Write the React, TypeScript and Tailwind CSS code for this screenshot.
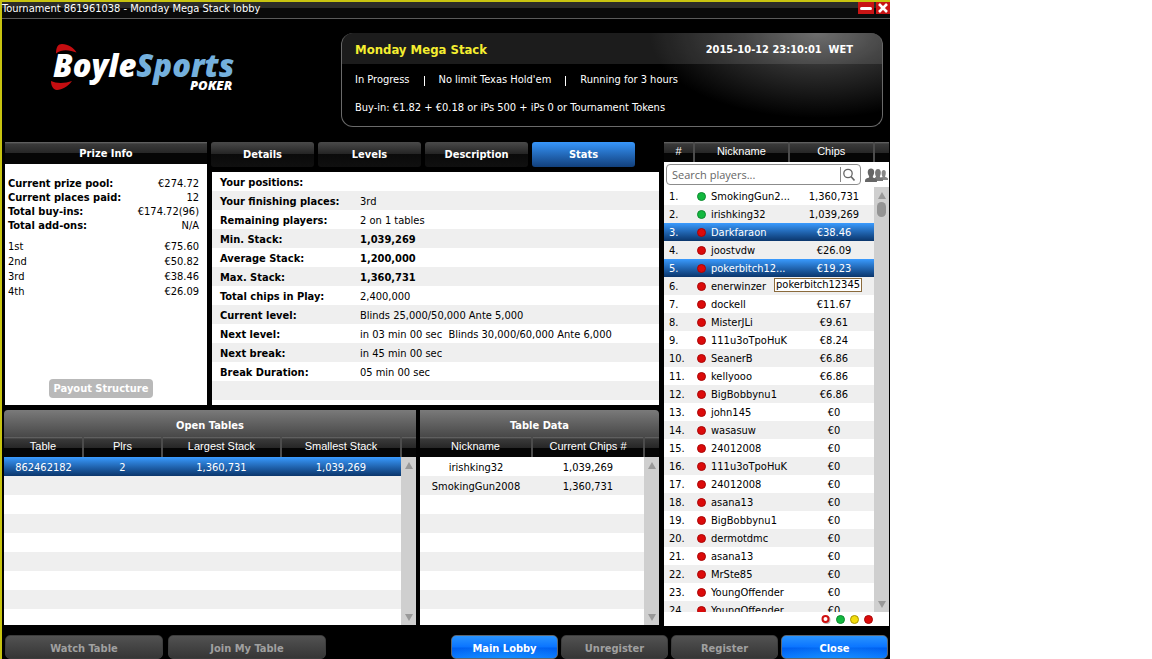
import React from "react";
import clsx from "clsx";

const HEAD =
  "bg-[linear-gradient(#6b6b6b_0px,#3a3a3a_2px,#262626_11px,#050505_11px,#050505_100%)]";
const STRIPES =
  "bg-[repeating-linear-gradient(#fff_0px,#fff_19px,#efefef_19px,#efefef_38px)]";
const SELECTED = "bg-linear-to-b from-[#3a9bff] to-[#0b366c] text-white";

const tabs = ["Details", "Levels", "Description", "Stats"];

const prizeSummary = [
  ["Current prize pool:", "€274.72"],
  ["Current places paid:", "12"],
  ["Total buy-ins:", "€174.72(96)"],
  ["Total add-ons:", "N/A"],
];

const payouts = [
  ["1st", "€75.60"],
  ["2nd", "€50.82"],
  ["3rd", "€38.46"],
  ["4th", "€26.09"],
];

const stats: { label: string; value: string; strong?: boolean }[] = [
  { label: "Your positions:", value: "" },
  { label: "Your finishing places:", value: "3rd" },
  { label: "Remaining players:", value: "2 on 1 tables" },
  { label: "Min. Stack:", value: "1,039,269", strong: true },
  { label: "Average Stack:", value: "1,200,000", strong: true },
  { label: "Max. Stack:", value: "1,360,731", strong: true },
  { label: "Total chips in Play:", value: "2,400,000" },
  { label: "Current level:", value: "Blinds 25,000/50,000 Ante 5,000" },
  { label: "Next level:", value: "in 03 min 00 sec\u00a0 Blinds 30,000/60,000 Ante 6,000" },
  { label: "Next break:", value: "in 45 min 00 sec" },
  { label: "Break Duration:", value: "05 min 00 sec" },
];

type Player = { name: string; chips: string; live?: boolean; selected?: boolean; tip?: string };

const players: Player[] = [
  { name: "SmokingGun2...", chips: "1,360,731", live: true },
  { name: "irishking32", chips: "1,039,269", live: true },
  { name: "Darkfaraon", chips: "€38.46", selected: true },
  { name: "joostvdw", chips: "€26.09" },
  { name: "pokerbitch12...", chips: "€19.23", selected: true, tip: "pokerbitch12345" },
  { name: "enerwinzer", chips: "" },
  { name: "dockell", chips: "€11.67" },
  { name: "MisterJLi", chips: "€9.61" },
  { name: "111u3oTpoHuK", chips: "€8.24" },
  { name: "SeanerB", chips: "€6.86" },
  { name: "kellyooo", chips: "€6.86" },
  { name: "BigBobbynu1", chips: "€6.86" },
  { name: "john145", chips: "€0" },
  { name: "wasasuw", chips: "€0" },
  { name: "24012008", chips: "€0" },
  { name: "111u3oTpoHuK", chips: "€0" },
  { name: "24012008", chips: "€0" },
  { name: "asana13", chips: "€0" },
  { name: "BigBobbynu1", chips: "€0" },
  { name: "dermotdmc", chips: "€0" },
  { name: "asana13", chips: "€0" },
  { name: "MrSte85", chips: "€0" },
  { name: "YoungOffender", chips: "€0" },
  { name: "YoungOffender", chips: "€0" },
];

function Logo() {
  return (
    <svg viewBox="0 0 200 60" className="h-[60px] w-[200px]" role="img" aria-label="BoyleSports Poker">
      <path d="M6 13.500C6 7 8 4 12 4c6 0 12 4 14.500 8.500C20 10 12 8.500 6 13.500Z" fill="#c40d10" />
      <path d="M1 41c5 2.500 14 2.500 21 0-4 5.500-10 9-15 9-4.500-.5-6-5-6-9Z" fill="#c40d10" />
      <g className="font-['Open_Sans',sans-serif] font-extrabold italic">
        <text x="3" y="37" fontSize="31" fill="#fff">
          Boyle<tspan fill="#74b0dd">Sports</tspan>
        </text>
        <text x="140" y="50" fontSize="13" fill="#fff">
          POKER
        </text>
      </g>
    </svg>
  );
}

function Dot({ color }: { color: "green" | "red" | "yellow" }) {
  return (
    <span
      className={clsx(
        "block size-[9px] shrink-0 rounded-full border",
        color === "green" && "border-[#0d8a30] bg-[#12b83e]",
        color === "red" && "border-[#a80606] bg-[#dc0a0a]",
        color === "yellow" && "border-[#a89400] bg-[#f2dc0c]",
      )}
    />
  );
}

function Scrollbar({ thumb }: { thumb?: boolean }) {
  return (
    <div className="flex w-[15px] shrink-0 flex-col items-center bg-[#cfcfcf] pt-1 pb-1">
      <button aria-label="Scroll up" className="flex h-2 w-full items-center justify-center">
        <svg viewBox="0 0 8 7" className="h-[7px] w-2">
          <path d="M4 0 8 7H0Z" fill="#999" />
        </svg>
      </button>
      {thumb && <div className="mt-[3px] h-[15px] w-[9px] rounded-full bg-[#949494]" />}
      <button aria-label="Scroll down" className="mt-auto flex h-2 w-full items-center justify-center">
        <svg viewBox="0 0 8 7" className="h-[7px] w-2">
          <path d="M4 7 8 0H0Z" fill="#999" />
        </svg>
      </button>
    </div>
  );
}

function Columns({ widths }: { widths: string[] }) {
  return (
    <colgroup>
      {widths.map((w, i) => (
        <col key={i} className={w} />
      ))}
    </colgroup>
  );
}

function HeaderTable({ cols, names }: { cols: string[]; names: string[] }) {
  return (
    <table className={clsx("w-full shrink-0 table-fixed border-collapse text-white", HEAD)}>
      <Columns widths={[...cols, "w-[15px]"]} />
      <thead>
        <tr className="h-5">
          {names.map((n, i) => (
            <th
              key={n}
              scope="col"
              className={clsx(
                "p-0 align-top font-['Liberation_Sans',sans-serif] text-[11px] leading-[19px] font-normal",
                i > 0 && "border-l-2 border-[#4c4c4c]",
              )}
            >
              {n}
            </th>
          ))}
          <td className="border-l-2 border-[#4c4c4c] p-0" />
        </tr>
      </thead>
    </table>
  );
}

function ListPanel({
  title,
  cols,
  names,
  rows,
  selected,
  className,
}: {
  title: string;
  cols: string[];
  names: string[];
  rows: string[][];
  selected?: number;
  className?: string;
}) {
  return (
    <section className={clsx("flex min-h-0 min-w-0 flex-col overflow-hidden", className)}>
      <h2 className="h-[27px] shrink-0 bg-linear-to-b from-[#7a7a7a] to-[#484848] pt-0.5 text-center text-[11px] leading-[28px] font-bold text-white">
        {title}
      </h2>
      <HeaderTable cols={cols} names={names} />
      <div className="flex min-h-0 flex-1">
        <div className={clsx("min-w-0 flex-1", STRIPES)}>
          <table aria-label={title} className="w-full table-fixed border-collapse text-center">
            <Columns widths={cols} />
            <tbody>
              {rows.map((r, i) => (
                <tr key={i} className={clsx("h-[19px]", i === selected && SELECTED)}>
                  {r.map((c, j) => (
                    <td key={j} className="p-0 pt-0.5 leading-[17px]">
                      {c}
                    </td>
                  ))}
                </tr>
              ))}
            </tbody>
          </table>
        </div>
        <Scrollbar />
      </div>
    </section>
  );
}

function PrizeInfo() {
  return (
    <section className="flex w-[202px] shrink-0 flex-col bg-white">
      <h2 className={clsx("h-[22px] text-center text-[11px] leading-6 font-bold text-white", HEAD)}>Prize Info</h2>
      <dl className="flex flex-col px-[3px] pt-[13px] pr-2">
        {prizeSummary.map(([k, v]) => (
          <div key={k} className="flex h-[14px] justify-between leading-[14px]">
            <dt className="font-bold">{k}</dt>
            <dd>{v}</dd>
          </div>
        ))}
      </dl>
      <dl className="flex flex-col px-[3px] pt-[6px] pr-2">
        {payouts.map(([k, v]) => (
          <div key={k} className="flex h-[15px] justify-between leading-[15px]">
            <dt>{k}</dt>
            <dd>{v}</dd>
          </div>
        ))}
      </dl>
      <button className="mt-auto mb-[7px] ml-11 h-[19px] w-[104px] rounded bg-[#b9b9b9] pt-px text-[11px] leading-[18px] font-bold whitespace-nowrap text-white">
        Payout Structure
      </button>
    </section>
  );
}

function Stats() {
  return (
    <section className="flex min-w-0 flex-1 flex-col">
      <div role="tablist" className="flex gap-1">
        {tabs.map((t) => (
          <button
            key={t}
            role="tab"
            aria-selected={t === "Stats"}
            className={clsx(
              "h-[25px] w-[103px] rounded-[3px] pt-0.5 text-[11px] font-bold text-white",
              t === "Stats"
                ? "bg-linear-to-b from-[#3796fb] to-[#12407c]"
                : "bg-[linear-gradient(#4a4a4a_0px,#242424_12px,#0a0a0a_12px,#101010_100%)]",
            )}
          >
            {t}
          </button>
        ))}
      </div>
      <div role="tabpanel" className={clsx("mt-[5px] ml-px flex-1", STRIPES)}>
        <table className="w-full table-fixed border-collapse text-left">
          <Columns widths={["w-[148px]", "w-auto"]} />
          <tbody>
            {stats.map((s) => (
              <tr key={s.label} className="h-[19px]">
                <th scope="row" className="p-0 pt-0.5 pl-2 leading-[17px] font-bold">
                  {s.label}
                </th>
                <td className={clsx("p-0 pt-0.5 leading-[17px] whitespace-nowrap", s.strong && "font-bold")}>
                  {s.value}
                </td>
              </tr>
            ))}
          </tbody>
        </table>
      </div>
    </section>
  );
}

function Players() {
  return (
    <section className="flex min-h-0 w-[225px] shrink-0 flex-col bg-white">
      <HeaderTable cols={["w-[30px]", "w-[94px]", "w-[85px]"]} names={["#", "Nickname", "Chips"]} />
      <div className="flex h-[25px] shrink-0 items-center gap-1 pl-0.5">
        <label className="flex h-[21px] w-[195px] items-center rounded border border-[#8c8c8c] pr-1">
          <input
            type="text"
            aria-label="Search players"
            placeholder="Search players..."
            className="h-full min-w-0 flex-1 bg-transparent pl-[5px] font-['Open_Sans',sans-serif] text-[11px] text-[#555] outline-none placeholder:text-[#666]"
          />
          <svg viewBox="0 0 18 15" className="h-[15px] w-[18px]" fill="none" stroke="#666">
            <path d="M2.500 0v15" stroke="#888" />
            <circle cx="10" cy="6.500" r="4.200" strokeWidth="1.300" />
            <path d="m13 9.500 3.500 4" strokeWidth="1.600" />
          </svg>
        </label>
        <button aria-label="Show groups">
          <svg viewBox="0 0 23 14" className="h-[14px] w-[23px]" fill="#666">
            <path d="M16 10.500V9.500c1-.3 1.500-.6 1.500-1C16.300 6.500 16 2 18.800 2S21 6.500 20 8.500c0 .5 2.500 1 3 2V12h-6Z" fill="#888" />
            <path d="M10 12V9.500c1-.3 1-.6 1-1C9.600 6 9.600 1 13 1s3.300 5 1.800 7.500c0 1 3 1.200 3.200 3V13h-8Z" fill="#777" />
            <path d="M0 14c0-3 .6-3.300 3.600-4.200C4.400 9.500 4.200 8.600 4 8 2 5 2.300.5 6 .5S10 5 8 8c-.2.600-.4 1.500.4 1.800 3 .9 3.600 1.200 3.600 4.200Z" />
          </svg>
        </button>
      </div>
      <div className="flex min-h-0 flex-1">
        <div className="min-w-0 flex-1 overflow-hidden">
          <table aria-label="Players" className="w-full table-fixed border-collapse">
            <Columns widths={["w-[33px]", "w-auto", "w-[80px]"]} />
            <tbody>
              {players.map((p, i) => (
                <tr
                  key={i}
                  className={clsx("h-[18px]", p.selected ? SELECTED : i % 2 ? "bg-[#efefef]" : "bg-white")}
                >
                  <td className="p-0 pt-0.5 pl-[5px] leading-4">{i + 1}.</td>
                  <td className="p-0">
                    <div className="flex h-[18px] items-center gap-[5px] whitespace-nowrap">
                      <Dot color={p.live ? "green" : "red"} />
                      <span className="pt-0.5 leading-4">{p.name}</span>
                    </div>
                  </td>
                  <td className="relative p-0 pt-0.5 text-center leading-4">
                    {p.chips}
                    {p.tip && (
                      <span
                        role="tooltip"
                        className="absolute top-[19px] right-3 z-10 h-[14px] border border-[#8a6a3c] bg-white px-px leading-3 text-black"
                      >
                        {p.tip}
                      </span>
                    )}
                  </td>
                </tr>
              ))}
            </tbody>
          </table>
        </div>
        <Scrollbar thumb />
      </div>
      <div className="flex h-[14px] shrink-0 items-center justify-end gap-[5px] pr-4">
        <svg viewBox="0 0 10 10" className="size-[10px]">
          <circle cx="5.500" cy="6" r="4" fill="#bbb" />
          <circle cx="4.500" cy="5" r="3" fill="#fff" stroke="#d01010" strokeWidth="2" />
        </svg>
        <Dot color="green" />
        <Dot color="yellow" />
        <Dot color="red" />
      </div>
    </section>
  );
}

function FooterButton({ children, primary, wide }: { children: string; primary?: boolean; wide?: boolean }) {
  return (
    <button
      disabled={!primary}
      className={clsx(
        "h-6 rounded-[5px] border pt-1 text-[11px] font-bold",
        wide ? "w-[158px]" : "w-[107px]",
        primary
          ? "border-[#5c6670] bg-[radial-gradient(ellipse_60px_14px_at_50%_100%,#1c9cff99,transparent),linear-gradient(#2a94ff_0px,#0a74ff_11px,#0060f0_12px,#0a78ff_100%)] text-white"
          : "border-[#3c3c3c] bg-linear-to-b from-[#525252] to-[#363636] text-[#a0a0a0]",
      )}
    >
      {children}
    </button>
  );
}

export default function App() {
  return (
    <div className="min-h-screen bg-white">
      <main className="flex h-screen min-h-[480px] w-full max-w-[890px] flex-col border-t-2 border-l-2 border-[#c8c410] bg-black font-['DejaVu_Sans_Condensed','DejaVu_Sans',sans-serif] text-[11px] text-black">
        <header className="flex h-[17px] shrink-0 justify-between border-b border-[#5a5a5a] bg-[linear-gradient(#2c2c28_0px,#2c2c28_6px,#0a0a0a_6px,#0a0a0a_100%)]">
          <h1 className="leading-[14px] text-white">Tournament 861961038 - Monday Mega Stack lobby</h1>
          <div className="flex gap-0.5">
            <button aria-label="Minimize" className="flex h-3 w-4 items-center justify-center bg-[#c81414]">
              <span className="h-[3px] w-3 rounded-sm bg-white" />
            </button>
            <button aria-label="Close window" className="flex h-3 w-[14px] items-center justify-center bg-[#c81414]">
              <svg viewBox="0 0 10 10" className="size-[10px]" stroke="#fff" strokeWidth="2.600">
                <path d="m1 1 8 8M9 1 1 9" />
              </svg>
            </button>
          </div>
        </header>

        <div className="flex h-[123px] shrink-0 justify-between pt-[14px] pr-[7px] pl-12">
          <div className="pt-[7px]">
            <Logo />
          </div>
          <section className="h-[94px] w-[542px] overflow-hidden rounded-[12px] border border-t-0 border-[#6a6a6a] bg-[radial-gradient(ellipse_170px_85px_at_88%_0%,#5c5c5c,#2c2c2c_45%,transparent)] text-white">
            <div className="flex h-[31px] items-center justify-between bg-white/11 pr-[29px] pl-[13px] font-bold">
              <h2 className="pt-0.5 text-[13px] text-[#f5ee30]">Monday Mega Stack</h2>
              <time className="pt-1">2015-10-12 23:10:01&nbsp; WET</time>
            </div>
            <div className="flex h-[30px] items-center gap-[14px] pt-0.5 pl-[13px]">
              <span>In Progress</span>
              <span className="mt-0.5 h-[10px] w-px bg-white" />
              <span>No limit Texas Hold'em</span>
              <span className="mt-0.5 h-[10px] w-px bg-white" />
              <span>Running for 3 hours</span>
            </div>
            <p className="pt-[6px] pl-[13px]">Buy-in: €1.82 + €0.18 or iPs 500 + iPs 0 or Tournament Tokens</p>
          </section>
        </div>

        <div className="flex min-h-0 flex-1 gap-[5px] pr-px">
          <div className="flex min-w-0 flex-1 flex-col gap-[5px] pl-0.5">
            <div className="flex h-[263px] shrink-0 gap-1 pl-px">
              <PrizeInfo />
              <Stats />
            </div>
            <div className="flex min-h-0 flex-1 gap-1 pb-px">
              <ListPanel
                title="Open Tables"
                className="flex-1 rounded-tl"
                cols={["w-[79px]", "w-[79px]", "w-[119px]", "w-[120px]"]}
                names={["Table", "Plrs", "Largest Stack", "Smallest Stack"]}
                rows={[["862462182", "2", "1,360,731", "1,039,269"]]}
                selected={0}
              />
              <ListPanel
                title="Table Data"
                className="w-[239px] shrink-0 rounded-tr"
                cols={["w-[112px]", "w-[112px]"]}
                names={["Nickname", "Current Chips #"]}
                rows={[
                  ["irishking32", "1,039,269"],
                  ["SmokingGun2008", "1,360,731"],
                ]}
              />
            </div>
          </div>
          <Players />
        </div>

        <footer className="flex h-[33px] shrink-0 items-end justify-between pr-0.5 pl-[3px]">
          <div className="flex gap-[5px]">
            <FooterButton wide>Watch Table</FooterButton>
            <FooterButton wide>Join My Table</FooterButton>
          </div>
          <div className="flex gap-[3px]">
            <FooterButton primary>Main Lobby</FooterButton>
            <FooterButton>Unregister</FooterButton>
            <FooterButton>Register</FooterButton>
            <FooterButton primary>Close</FooterButton>
          </div>
        </footer>
      </main>
    </div>
  );
}
